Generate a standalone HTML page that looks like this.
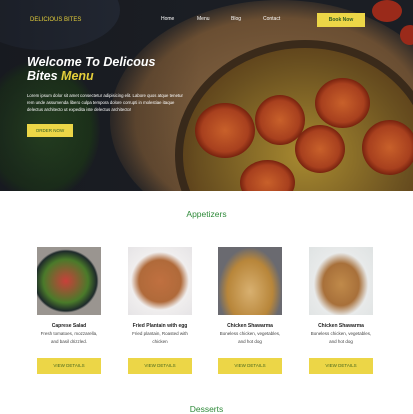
<!DOCTYPE html>
<html><head><style>
*{margin:0;padding:0;box-sizing:border-box}
body{width:413px;height:412px;overflow:hidden;background:#fff;font-family:"Liberation Sans",sans-serif;position:relative}
.hero{position:absolute;left:0;top:0;width:413px;height:191px;overflow:hidden;background:#1b1e24}
.blob{position:absolute;border-radius:50%}
.nav a{position:absolute;top:16px;color:#fff;font-size:5px}
.card{position:absolute;top:247px;width:64px;text-align:center}
.card .img{width:64px;height:68px}
.card h4{font-size:5px;margin-top:8px;color:#222}
.card p{font-size:4.5px;color:#444;line-height:8px;margin-top:1px}
.btn{position:absolute;top:358px;width:64px;height:16px;background:#ecd647;color:#4a6a1f;font-size:4.5px;text-align:center;line-height:16px}
.tom{background:radial-gradient(#c8602a,#a8401e 55%,#6a1a0a 75%,#3a1a0a)}
</style></head><body>
<div class="hero">
 <div class="blob" style="left:-30px;top:-30px;width:150px;height:80px;background:#2a3140;opacity:.7"></div>
 <div class="blob" style="left:-20px;top:60px;width:120px;height:140px;background:radial-gradient(#2f5a22,#1e3a18 60%,transparent 72%)"></div>
 <div class="blob" style="left:110px;top:0;width:340px;height:240px;background:radial-gradient(#8a6a47,#6a4e32 60%,#1b1e24 75%)"></div>
 <div class="blob" style="left:175px;top:40px;width:260px;height:230px;background:#3a2a1a"></div>
 <div class="blob" style="left:183px;top:48px;width:244px;height:214px;background:radial-gradient(#a88a30,#6a5020 60%,#4a2a12)"></div>
 <div class="blob tom" style="left:195px;top:103px;width:60px;height:55px"></div>
 <div class="blob tom" style="left:255px;top:95px;width:50px;height:50px"></div>
 <div class="blob tom" style="left:315px;top:78px;width:55px;height:50px"></div>
 <div class="blob tom" style="left:295px;top:125px;width:50px;height:48px"></div>
 <div class="blob tom" style="left:362px;top:120px;width:55px;height:55px"></div>
 <div class="blob tom" style="left:240px;top:160px;width:55px;height:45px"></div>
 <div class="blob" style="left:372px;top:0;width:30px;height:22px;background:#9a2a1a"></div>
 <div class="blob" style="left:400px;top:25px;width:20px;height:20px;background:#9a2a1a"></div>
 <div style="position:absolute;left:0;top:0;width:200px;height:191px;background:linear-gradient(90deg,rgba(20,22,28,.55),rgba(20,22,28,0))"></div>
 <div style="position:absolute;left:30px;top:17px;color:#e5cf3b;font-size:6px">DELICIOUS BITES</div>
 <div class="nav"><a style="left:161px">Home</a><a style="left:197px">Menu</a><a style="left:231px">Blog</a><a style="left:263px">Contact</a></div>
 <div style="position:absolute;left:317px;top:13px;width:48px;height:14px;background:#ecd647;color:#2f5a22;font-size:5px;text-align:center;line-height:14px;font-weight:bold">Book Now</div>
 <div style="position:absolute;left:27px;top:55px;color:#fff;font-size:12.5px;font-weight:bold;font-style:italic;line-height:14px">Welcome To Delicous<br>Bites <span style="color:#e5cf3b">Menu</span></div>
 <div style="position:absolute;left:27px;top:92px;width:160px;color:#fff;font-size:4.3px;line-height:7px">Lorem ipsum dolor sit amet consectetur adipisicing elit. Labore quos atque tenetur rem unde assumenda libero culpa tempora dolore corrupti in molestiae itaque delectus architecto ut expedita iste delectus architecto!</div>
 <div style="position:absolute;left:27px;top:124px;width:46px;height:13px;background:#ecd647;color:#2f5a22;font-size:4.5px;text-align:center;line-height:13px">ORDER NOW</div>
</div>
<div style="position:absolute;left:0;top:209px;width:413px;text-align:center;color:#2f8a3a;font-size:8.5px">Appetizers</div>
<div class="card" style="left:37px"><div class="img" style="background:radial-gradient(ellipse at 45% 50%,#c9403a,#4a7a2a 45%,#1e2a2a 62%,#9a9590 66%)"></div><h4>Caprese Salad</h4><p>Fresh tomatoes, mozzarella,<br>and basil drizzled.</p></div>
<div class="card" style="left:128px"><div class="img" style="background:radial-gradient(circle at 50% 50%,#c07040,#b06a3a 45%,#f0eeee 62%,#e6e4e6)"></div><h4>Fried Plantain with egg</h4><p>Fried plantain, Roasted with<br>chicken</p></div>
<div class="card" style="left:218px"><div class="img" style="background:radial-gradient(ellipse at 50% 65%,#d8b070,#b8863a 50%,#6a6a70 70%)"></div><h4>Chicken Shawarma</h4><p>Boneless chicken, vegetables,<br>and hot dog</p></div>
<div class="card" style="left:309px"><div class="img" style="background:radial-gradient(ellipse at 50% 55%,#c08a4a,#a8703a 40%,#e8eaea 60%,#dfe3e3)"></div><h4>Chicken Shawarma</h4><p>Boneless chicken, vegetables,<br>and hot dog</p></div>
<div class="btn" style="left:37px">VIEW DETAILS</div>
<div class="btn" style="left:128px">VIEW DETAILS</div>
<div class="btn" style="left:218px">VIEW DETAILS</div>
<div class="btn" style="left:309px">VIEW DETAILS</div>
<div style="position:absolute;left:0;top:404px;width:413px;text-align:center;color:#2f8a3a;font-size:8.5px">Desserts</div>
</body></html>
